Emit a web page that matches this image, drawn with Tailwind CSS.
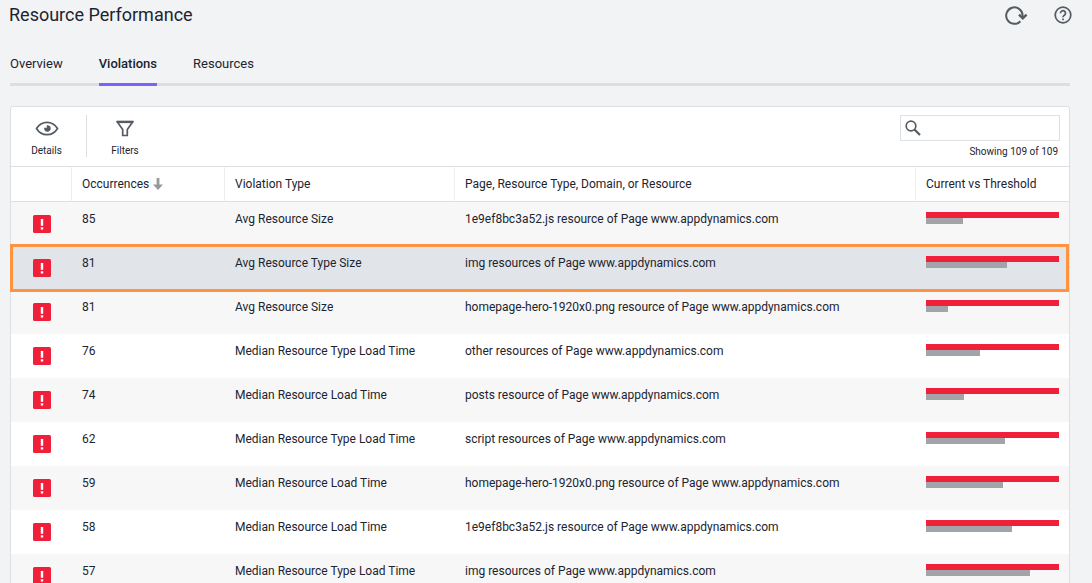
<!DOCTYPE html>
<html lang="en">
<head>
<meta charset="utf-8">
<meta name="viewport" content="width=device-width, initial-scale=1">
<title>Resource Performance</title>
<script src="https://cdn.jsdelivr.net/npm/@tailwindcss/browser@4"></script>
</head>
<body class="h-screen overflow-hidden bg-[#f1f3f5] font-['Roboto',sans-serif] text-xs leading-4 text-[#1c2430]">
<svg class="hidden" aria-hidden="true">
  <symbol id="alert" viewBox="0 0 18 18"><rect width="18" height="18" rx="1.500" fill="#f1203a"/><path d="M7.800 4h2.400v6.800H7.800z" fill="#fff"/><rect x="7.800" y="12.300" width="2.400" height="2.200" fill="#fff"/></symbol>
</svg>
<header class="flex h-[30px] items-center justify-between pr-5 pl-[9px]">
  <h1 class="text-lg leading-6">Resource Performance</h1>
  <div class="flex items-center gap-6 text-[#555b62]">
    <button type="button" aria-label="Refresh" class="block"><svg class="block h-6 w-7" viewBox="0 0 28 24" fill="none" stroke="currentColor" stroke-width="2"><path d="M18.400 18.200A8.200 8.200 0 1 1 20.600 12.200V15"/><path d="M17 11.600l3.800 3.800 3.800-3.800" stroke-width="2.400"/></svg></button>
    <button type="button" aria-label="Help" class="block"><svg class="block h-[18px] w-[18px]" viewBox="0 0 18 18" fill="none" stroke="currentColor" stroke-width="1.700"><circle cx="9" cy="9" r="7.800"/><path d="M6.500 7.200a2.500 2.500 0 1 1 4.200 1.800C9.700 9.800 9 10 9 11.200M9 12.400v1.800"/></svg></button>
  </div>
</header>
<main class="mr-[22px] ml-[10px] pt-[26px]">
  <nav class="flex h-[30px] gap-9 border-b-3 border-[#dcdee3] text-[13px]">
    <a href="#" class="h-[30px]">Overview</a>
    <a href="#" aria-current="page" class="h-[30px] border-b-3 border-[#7764fb] font-medium">Violations</a>
    <a href="#" class="h-[30px]">Resources</a>
  </nav>
  <section class="mt-5 rounded-t-[3px] border border-[#dce0e4] bg-white">
    <div class="flex h-[59px] items-start justify-between pr-[9px]">
      <div class="flex pt-2 text-[10px]">
        <button type="button" class="flex h-[42px] w-[76px] flex-col items-center gap-2 border-r border-[#dce0e4] pt-1 pr-1">
          <svg class="h-[18px] w-6" viewBox="0 0 24 18" fill="none" stroke="#555b62" stroke-width="1.700"><path d="M1.500 9.500C4 5.300 7.600 3.300 12 3.300s8 2 10.500 6.200c-2.500 4.200-6.100 6.200-10.500 6.200S4 13.700 1.500 9.500z"/><path d="M11.800 6.200v2.600H9.200A3.300 3.300 0 1 0 11.800 6.200z" fill="#555b62" stroke="none"/></svg>
          <span class="leading-3">Details</span>
        </button>
        <button type="button" class="flex h-[42px] w-[76px] flex-col items-center gap-2 pt-1">
          <svg class="h-[18px] w-5" viewBox="0 0 20 18" fill="none" stroke="#555b62" stroke-width="1.700" stroke-linejoin="round"><path d="M2 2.600h16L12.300 10.500v6H7.700v-6z"/><path d="M1.800 3h16.400" stroke-width="2.200"/></svg>
          <span class="leading-3">Filters</span>
        </button>
      </div>
      <div class="flex flex-col items-end pt-2">
        <label class="flex h-[26px] w-40 items-center border border-[#dce0e4] px-1">
          <svg class="h-4 w-4 shrink-0" viewBox="0 0 16 16" fill="none" stroke="#555b62"><circle cx="6" cy="6" r="4.800" stroke-width="1.700"/><path d="M9.500 9.500l5.500 5.500" stroke-width="2.200"/></svg>
          <input type="search" aria-label="Search violations" class="ml-1 w-full min-w-0 outline-none">
        </label>
        <span class="mt-[5px] pr-0.5 text-[10px] leading-3">Showing 109 of 109</span>
      </div>
    </div>
    <table class="w-full table-fixed border-separate border-spacing-0 text-left [&_td]:h-11 [&_td]:px-[10px] [&_td]:pt-[9px] [&_td]:align-top [&_th]:h-[36px] [&_th]:border-y [&_th]:border-y-[#dce0e4] [&_th]:px-[10px] [&_th]:font-normal">
      <colgroup><col class="w-[61px]"><col class="w-[153px]"><col class="w-[230px]"><col><col class="w-[153px]"></colgroup>
      <thead>
        <tr>
          <th aria-label="Severity" class="border-r border-r-[#eceef0]"></th>
          <th class="border-r border-r-[#eceef0]"><button type="button" class="flex items-center gap-1">Occurrences <svg class="h-3 w-[10px]" viewBox="0 0 10 12"><path d="M3.600 0h2.800v6.500H10L5 12 0 6.500h3.600z" fill="#999"/></svg></button></th>
          <th class="border-r border-r-[#eceef0]">Violation Type</th>
          <th class="border-r border-r-[#eceef0]">Page, Resource Type, Domain, or Resource</th>
          <th>Current vs Threshold</th>
        </tr>
      </thead>
      <tbody>
        <tr class="bg-[#f7f7f7]">
          <td><svg class="mt-1 ml-3 h-[18px] w-[18px]"><use href="#alert"/></svg></td><td>85</td><td>Avg Resource Size</td><td>1e9ef8bc3a52.js resource of Page www.appdynamics.com</td>
          <td><div class="mt-px h-1.5 bg-[#f1203a]"></div><div class="h-1.5 bg-[#a1a5a9]" style="width:28%"></div></td>
        </tr>
        <tr class="relative bg-[#e1e4e9]">
          <td class="after:pointer-events-none after:absolute after:-inset-y-0.5 after:right-0 after:-left-px after:border-3 after:border-[#ff9340]"><svg class="mt-1 ml-3 h-[18px] w-[18px]"><use href="#alert"/></svg></td><td>81</td><td>Avg Resource Type Size</td><td>img resources of Page www.appdynamics.com</td>
          <td><div class="mt-px h-1.5 bg-[#f1203a]"></div><div class="h-1.5 bg-[#a1a5a9]" style="width:61%"></div></td>
        </tr>
        <tr class="bg-[#f7f7f7]">
          <td><svg class="mt-1 ml-3 h-[18px] w-[18px]"><use href="#alert"/></svg></td><td>81</td><td>Avg Resource Size</td><td>homepage-hero-1920x0.png resource of Page www.appdynamics.com</td>
          <td><div class="mt-px h-1.5 bg-[#f1203a]"></div><div class="h-1.5 bg-[#a1a5a9]" style="width:16.5%"></div></td>
        </tr>
        <tr class="bg-white">
          <td><svg class="mt-1 ml-3 h-[18px] w-[18px]"><use href="#alert"/></svg></td><td>76</td><td>Median Resource Type Load Time</td><td>other resources of Page www.appdynamics.com</td>
          <td><div class="mt-px h-1.5 bg-[#f1203a]"></div><div class="h-1.5 bg-[#a1a5a9]" style="width:40.6%"></div></td>
        </tr>
        <tr class="bg-[#f7f7f7]">
          <td><svg class="mt-1 ml-3 h-[18px] w-[18px]"><use href="#alert"/></svg></td><td>74</td><td>Median Resource Load Time</td><td>posts resource of Page www.appdynamics.com</td>
          <td><div class="mt-px h-1.5 bg-[#f1203a]"></div><div class="h-1.5 bg-[#a1a5a9]" style="width:28.6%"></div></td>
        </tr>
        <tr class="bg-white">
          <td><svg class="mt-1 ml-3 h-[18px] w-[18px]"><use href="#alert"/></svg></td><td>62</td><td>Median Resource Type Load Time</td><td>script resources of Page www.appdynamics.com</td>
          <td><div class="mt-px h-1.5 bg-[#f1203a]"></div><div class="h-1.5 bg-[#a1a5a9]" style="width:59.4%"></div></td>
        </tr>
        <tr class="bg-[#f7f7f7]">
          <td><svg class="mt-1 ml-3 h-[18px] w-[18px]"><use href="#alert"/></svg></td><td>59</td><td>Median Resource Load Time</td><td>homepage-hero-1920x0.png resource of Page www.appdynamics.com</td>
          <td><div class="mt-px h-1.5 bg-[#f1203a]"></div><div class="h-1.5 bg-[#a1a5a9]" style="width:57.9%"></div></td>
        </tr>
        <tr class="bg-white">
          <td><svg class="mt-1 ml-3 h-[18px] w-[18px]"><use href="#alert"/></svg></td><td>58</td><td>Median Resource Load Time</td><td>1e9ef8bc3a52.js resource of Page www.appdynamics.com</td>
          <td><div class="mt-px h-1.5 bg-[#f1203a]"></div><div class="h-1.5 bg-[#a1a5a9]" style="width:64.7%"></div></td>
        </tr>
        <tr class="bg-[#f7f7f7]">
          <td><svg class="mt-1 ml-3 h-[18px] w-[18px]"><use href="#alert"/></svg></td><td>57</td><td>Median Resource Type Load Time</td><td>img resources of Page www.appdynamics.com</td>
          <td><div class="mt-px h-1.5 bg-[#f1203a]"></div><div class="h-1.5 bg-[#a1a5a9]" style="width:78.2%"></div></td>
        </tr>
      </tbody>
    </table>
  </section>
</main>
</body>
</html>
